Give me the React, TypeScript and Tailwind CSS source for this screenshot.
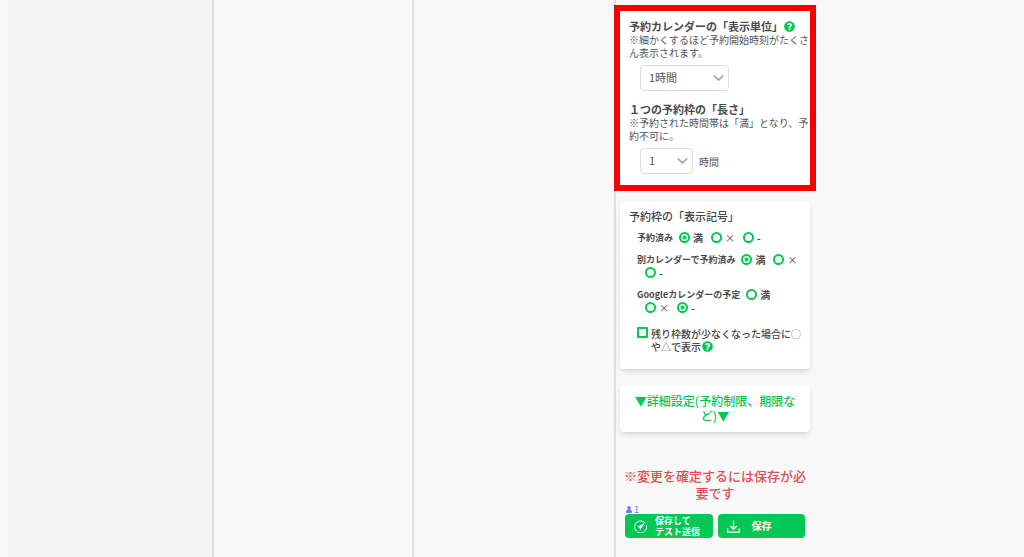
import React from "react";
import { FaQuestionCircle } from "react-icons/fa";

const SYMBOLS = ["満", "×", "-"];

const symbolRows = [
  { id: "reserved", label: "予約済み", selected: "満" },
  { id: "other-calendar", label: "別カレンダーで予約済み", selected: "満" },
  { id: "google-calendar", label: "Googleカレンダーの予定", selected: "-" },
];

function HelpButton({ label }: { label: string }) {
  return (
    <button type="button" aria-label={label} className="ml-px inline-block shrink-0 align-[-1px] text-[#06c755]">
      <FaQuestionCircle className="h-[11px] w-[11px]" />
    </button>
  );
}

function Select({
  id,
  options,
  className,
}: {
  id: string;
  options: string[];
  className: string;
}) {
  return (
    <div className={`grid items-center ${className}`}>
      <select
        id={id}
        className="col-start-1 row-start-1 h-[26px] w-full appearance-none rounded-sm border border-[#dcdcdc] bg-white pb-px pl-2 text-[11px] text-[#555]"
      >
        {options.map((option) => (
          <option key={option}>{option}</option>
        ))}
      </select>
      <svg
        viewBox="0 0 10 6"
        className="pointer-events-none col-start-1 row-start-1 mr-[5px] h-[6px] w-[11px] justify-self-end"
        fill="none"
        stroke="#a8a8a8"
        strokeWidth="1.8"
      >
        <path d="M0.4 0.6 5 5 9.6 0.6" />
      </svg>
    </div>
  );
}

function SymbolRow({ id, label, selected }: { id: string; label: string; selected: string }) {
  return (
    <div
      role="radiogroup"
      aria-label={label}
      className="flex flex-wrap items-center text-[9px] leading-[13px] font-bold text-[#4a4a4a]"
    >
      <span className="-mr-[2px]">{label}</span>
      {SYMBOLS.map((symbol) => (
        <label key={symbol} className="ml-2 flex items-center gap-[3px]">
          <input
            type="radio"
            name={id}
            defaultChecked={symbol === selected}
            className="h-[11px] w-[11px] appearance-none rounded-full border-2 border-solid border-[#06c755] bg-white checked:bg-[radial-gradient(circle,#06c755_1px,white_3px)]"
          />
          <span className={symbol === "×" ? "w-[10px] text-center text-[10px] font-normal" : "text-[10px]"}>
            {symbol}
          </span>
        </label>
      ))}
    </div>
  );
}

function UserIcon() {
  return (
    <svg viewBox="0 0 12 14" className="h-[7px] w-[6px]" fill="currentColor">
      <circle cx="6" cy="3.6" r="3.5" />
      <path d="M3 6.400h6L12 11v1.400c0 .9-.7 1.600-1.600 1.600H1.600C.7 14 0 13.300 0 12.400V11z" />
    </svg>
  );
}

function SendIcon() {
  return (
    <svg viewBox="0 0 24 24" className="h-[13px] w-[13px] shrink-0" fill="none" stroke="currentColor" strokeWidth="1.7">
      <path d="M20.500 5.500A11 11 0 1 0 22.600 9" />
      <path d="M18.500 7 6 12.500l4 1.800 1.500 4.200z" fill="currentColor" stroke="none" />
      <path d="M19 6 10 14.500" />
    </svg>
  );
}

function SaveIcon() {
  return (
    <svg viewBox="0 0 24 24" className="h-[13px] w-[13px] shrink-0" fill="none" stroke="currentColor" strokeWidth="2.4">
      <path d="M1.200 15v7.500h21.600V15" />
      <path d="M12 1v15.500M6 11l6 6 6-6" />
    </svg>
  );
}

export default function App() {
  return (
    <div
      lang="ja"
      className="grid min-h-screen grid-cols-[206fr_200fr_202fr_198fr_210fr] bg-[#f8f8f8] pl-2 font-['Noto_Sans_CJK_JP',sans-serif] text-[#555]"
    >
      <div className="border-r-2 border-[#dedede] bg-[#f3f3f3]" />
      <div className="border-r-2 border-[#e2e2e2]" />
      <div className="border-r-2 border-[#dedede]" />

      <main className="min-w-0 px-1">
        <div className="h-px rounded-b-sm bg-white shadow-md" />

        <section className="mt-[10px] bg-white pt-2 pb-[11px] pl-[9px] outline-[6px] outline-[#f80000]">
          <div className="flex items-center text-[11px] leading-[14px] font-bold text-[#4a4a4a]">
            <label htmlFor="unit" className="whitespace-nowrap">
              予約カレンダーの「表示単位」
            </label>
            <HelpButton label="表示単位のヘルプ" />
          </div>
          <p className="text-[10px] leading-[13px]">※細かくするほど予約開始時刻がたくさん表示されます。</p>
          <Select id="unit" options={["1時間", "30分", "15分"]} className="mt-[6px] ml-[11px] w-[89px]" />

          <label
            htmlFor="length"
            className="mt-[11px] block text-[11px] leading-[14px] font-bold text-[#4a4a4a]"
          >
            １つの予約枠の「長さ」
          </label>
          <p className="text-[10px] leading-[13px]">※予約された時間帯は「満」となり、予約不可に。</p>
          <div className="mt-[6px] ml-[11px] flex items-center gap-[6px] text-[10px]">
            <Select id="length" options={["1", "2", "3"]} className="w-[53px]" />
            <span>時間</span>
          </div>
        </section>

        <section className="mt-[17px] rounded-sm bg-white pt-[7px] pb-4 pl-[9px] shadow-md">
          <h2 className="text-[11px] leading-[14px] font-medium text-[#444]">予約枠の「表示記号」</h2>
          <div className="mt-2 mr-2 ml-2 flex flex-col gap-[9px]">
            {symbolRows.map((row) => (
              <SymbolRow key={row.id} {...row} />
            ))}
          </div>
          <div className="mt-[13px] ml-2 flex items-start gap-[3px] text-[10px] leading-[13px] font-medium text-[#444]">
            <input
              id="few-left"
              type="checkbox"
              className="h-[11px] w-[11px] shrink-0 appearance-none rounded-[1px] border-2 border-solid border-[#06c755] bg-white checked:bg-[#06c755]"
            />
            <div>
              <label htmlFor="few-left">
                残り枠数が少なくなった場合に<span className="font-light">◯</span>
                <br />
                や<span className="font-light">△</span>で表示
              </label>
              <HelpButton label="残り枠数表示のヘルプ" />
            </div>
          </div>
        </section>

        <button
          type="button"
          className="mt-4 block w-full rounded-sm bg-white px-3 pt-2 pb-[9px] text-center text-xs leading-[15px] font-medium text-[#06c755] shadow-md"
        >
          ▼詳細設定(予約制限、期限など)▼
        </button>

        <p className="mt-[35px] text-center text-[13px] leading-[17px] font-medium text-[#e05050]">
          ※変更を確定するには保存が必要です
        </p>

        <div className="mt-1 ml-[6px] flex items-center gap-[2px] text-[9px] leading-[9px] text-[#6478ff]">
          <UserIcon />
          <span>1</span>
        </div>

        <div className="mx-[5px] grid grid-cols-2 gap-[5px] text-white">
          <button
            type="button"
            className="flex h-6 items-center gap-2 rounded-sm bg-[#06c755] pl-[9px] text-left text-[9px] leading-[11px] font-bold whitespace-nowrap"
          >
            <SendIcon />
            <span>
              保存して
              <br />
              テスト送信
            </span>
          </button>
          <button
            type="button"
            className="flex h-6 items-center gap-3 rounded-sm bg-[#06c755] pl-[9px] text-left text-[10px] leading-[10px] font-bold"
          >
            <SaveIcon />
            <span>保存</span>
          </button>
        </div>
      </main>
      <div />
    </div>
  );
}
